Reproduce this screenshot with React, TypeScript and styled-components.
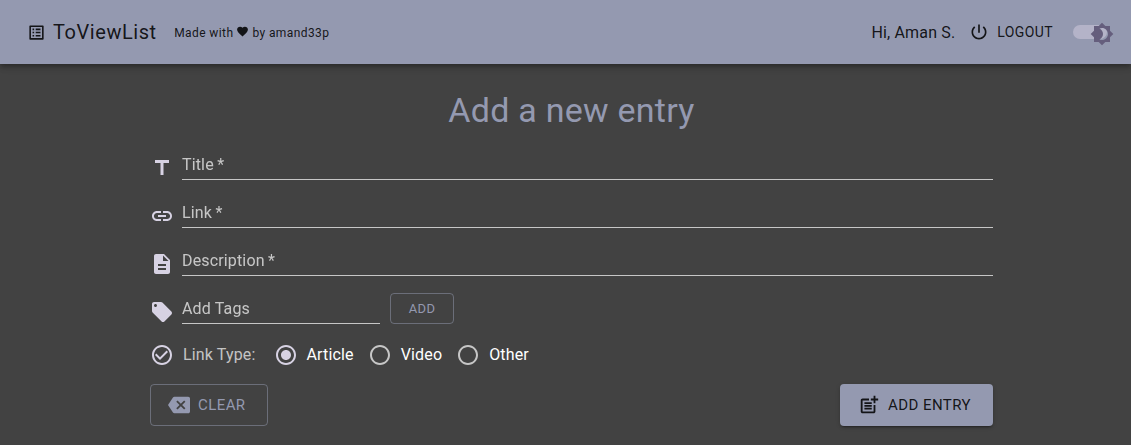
import React from "react";
import styled, { createGlobalStyle } from "styled-components";

const GlobalStyle = createGlobalStyle`
  *, *::before, *::after { box-sizing: border-box; }
  body {
    margin: 0;
    min-height: 100vh;
    overflow: hidden;
    background: #424242;
    font-family: Roboto, "Liberation Sans", sans-serif;
    font-size: 16px;
    line-height: 1.5;
    letter-spacing: 0.00938em;
    color: #fff;
  }
`;

const paths = {
  list: "M11 7h6v2h-6zm0 4h6v2h-6zm0 4h6v2h-6zM7 7h2v2H7zm0 4h2v2H7zm0 4h2v2H7zM20.1 3H3.9c-.5 0-.9.4-.9.9v16.2c0 .4.4.9.9.9h16.2c.4 0 .9-.5.9-.9V3.9c0-.5-.5-.9-.9-.9zM19 19H5V5h14v14z",
  heart:
    "M12 21.35l-1.45-1.32C5.4 15.36 2 12.28 2 8.5 2 5.42 4.42 3 7.5 3c1.74 0 3.41.81 4.5 2.09C13.09 3.81 14.76 3 16.5 3 19.58 3 22 5.42 22 8.5c0 3.78-3.4 6.86-8.55 11.54L12 21.35z",
  power:
    "M13 3h-2v10h2V3zm4.83 2.17l-1.42 1.42C17.99 7.86 19 9.81 19 12c0 3.87-3.13 7-7 7s-7-3.13-7-7c0-2.19 1.01-4.14 2.58-5.42L6.17 5.17C4.23 6.82 3 9.26 3 12c0 4.97 4.03 9 9 9s9-4.03 9-9c0-2.74-1.23-5.18-3.17-6.83z",
  moon: "M20 8.69V4h-4.69L12 .69 8.69 4H4v4.69L.69 12 4 15.31V20h4.69L12 23.31 15.31 20H20v-4.69L23.31 12 20 8.69zM12 18c-.89 0-1.74-.2-2.5-.55C11.56 16.5 13 14.42 13 12s-1.44-4.5-3.5-5.45C10.26 6.2 11.11 6 12 6c3.31 0 6 2.69 6 6s-2.69 6-6 6z",
  title: "M5 4v3h5.5v12h3V7H19V4z",
  link: "M3.9 12c0-1.71 1.39-3.1 3.1-3.1h4V7H7c-2.76 0-5 2.24-5 5s2.24 5 5 5h4v-1.9H7c-1.71 0-3.1-1.39-3.1-3.1zM8 13h8v-2H8v2zm9-6h-4v1.9h4c1.71 0 3.1 1.39 3.1 3.1s-1.39 3.1-3.1 3.1h-4V17h4c2.76 0 5-2.24 5-5s-2.24-5-5-5z",
  description:
    "M14 2H6c-1.1 0-1.99.9-1.99 2L4 20c0 1.1.89 2 1.99 2H18c1.1 0 2-.9 2-2V8l-6-6zm2 16H8v-2h8v2zm0-4H8v-2h8v2zm-3-5V3.5L18.5 9H13z",
  tag: "M21.41 11.58l-9-9C12.05 2.22 11.55 2 11 2H4c-1.1 0-2 .9-2 2v7c0 .55.22 1.05.59 1.42l9 9c.36.36.86.58 1.41.58.55 0 1.05-.22 1.41-.59l7-7c.37-.36.59-.86.59-1.41 0-.55-.23-1.06-.59-1.42zM5.5 7C4.67 7 4 6.33 4 5.5S4.67 4 5.5 4 7 4.67 7 5.5 6.33 7 5.5 7z",
  check:
    "M16.59 7.58L10 14.17l-3.59-3.58L5 12l5 5 8-8zM12 2C6.48 2 2 6.48 2 12s4.48 10 10 10 10-4.48 10-10S17.52 2 12 2zm0 18c-4.42 0-8-3.58-8-8s3.58-8 8-8 8 3.58 8 8-3.58 8-8 8z",
  radioOff:
    "M12 2C6.48 2 2 6.48 2 12s4.48 10 10 10 10-4.48 10-10S17.52 2 12 2zm0 18c-4.42 0-8-3.58-8-8s3.58-8 8-8 8 3.58 8 8-3.58 8-8 8z",
  radioOn:
    "M12 7c-2.76 0-5 2.24-5 5s2.24 5 5 5 5-2.24 5-5-2.24-5-5-5zM12 2C6.48 2 2 6.48 2 12s4.48 10 10 10 10-4.48 10-10S17.52 2 12 2zm0 18c-4.42 0-8-3.58-8-8s3.58-8 8-8 8 3.58 8 8-3.58 8-8 8z",
  backspace:
    "M22 3H7c-.69 0-1.23.35-1.59.88L0 12l5.41 8.11c.36.53.9.89 1.59.89h15c1.1 0 2-.9 2-2V5c0-1.1-.9-2-2-2zm-3 12.59L17.59 17 14 13.41 10.41 17 9 15.59 12.59 12 9 8.41 10.41 7 14 10.59 17.59 7 19 8.41 15.41 12 19 15.59z",
  postAdd:
    "M17 19.22H5V7h7V5H5c-1.1 0-2 .9-2 2v12c0 1.1.9 2 2 2h12c1.1 0 2-.9 2-2v-7h-2v7.22zM19 2h-2v3h-3c.01.01 0 2 0 2h3v2.99c.01.01 2 0 2 0V7h3V5h-3V2zM7 9h8v2H7zM7 12v2h8v-2h-3zM7 15h8v2H7z",
};

const Svg = styled.svg<{ $size: number }>`
  display: block;
  flex: none;
  width: ${(p) => p.$size}px;
  height: ${(p) => p.$size}px;
  fill: currentColor;
`;

const Icon = ({ name, size = 24 }: { name: keyof typeof paths; size?: number }) => (
  <Svg $size={size} viewBox="0 0 24 24" aria-hidden="true">
    <path d={paths[name]} />
  </Svg>
);

const AppBar = styled.header`
  display: flex;
  align-items: center;
  justify-content: space-between;
  height: 64px;
  padding: 0 17px 0 26.5px;
  background: #9499b0;
  color: rgba(0, 0, 0, 0.87);
  box-shadow: 0 2px 4px -1px rgba(0, 0, 0, 0.2), 0 4px 5px 0 rgba(0, 0, 0, 0.14),
    0 1px 10px 0 rgba(0, 0, 0, 0.12);
`;

const Group = styled.div`
  display: flex;
  align-items: center;
`;

const Brand = styled.h6`
  margin: 0 17.5px 0 7.5px;
  font-size: 20px;
  font-weight: 400;
  line-height: 32px;
  letter-spacing: 0.028em;
`;

const Credit = styled.span`
  display: flex;
  gap: 3px;
  padding-top: 1px;
  font-size: 12px;
  line-height: 20px;
  letter-spacing: 0.0333em;
  svg { margin-top: 2px; }
`;

const Greeting = styled.span`
  padding-top: 2px;
`;

const Logout = styled.button`
  display: flex;
  align-items: center;
  gap: 8px;
  margin: 0 20px 0 14px;
  padding: 0;
  border: 0;
  background: none;
  color: inherit;
  font: 400 14px/24px Roboto, sans-serif;
  letter-spacing: 0.02857em;
`;

const Switch = styled.div`
  display: flex;
  align-items: center;
  width: 41px;
  color: #655e7d;
  svg { margin: 4px 0 0 -17px; }
`;

const Track = styled.span`
  flex: none;
  width: 34px;
  height: 14px;
  border-radius: 7px;
  background: #b4b3c8;
`;

const Form = styled.form`
  display: flex;
  flex-direction: column;
  width: 843px;
  margin: 25px 0 0 150px;
`;

const Heading = styled.h4`
  margin: 0 0 17px;
  font-size: 34px;
  font-weight: 400;
  line-height: 42px;
  letter-spacing: 0.00735em;
  text-align: center;
  color: #9499b0;
`;

const FieldRow = styled.div`
  display: flex;
  align-items: flex-end;
  height: 32px;
  margin-bottom: 16px;
  color: #d7d2e3;
`;

const Field = styled.label<{ $width?: number }>`
  flex: ${(p) => (p.$width ? `0 0 ${p.$width}px` : "1")};
  height: 32px;
  margin-left: 8px;
  padding-top: 5px;
  border-bottom: 1px solid #c6c6c6;
  color: rgba(255, 255, 255, 0.7);
  line-height: 24px;
`;

const LabelText = styled.span`
  display: block;
  will-change: transform;
`;

const Button = styled.button<{ $kind: "outlined" | "contained"; $small?: boolean }>`
  display: flex;
  align-items: center;
  justify-content: center;
  gap: 8px;
  height: ${(p) => (p.$small ? 31 : 42)}px;
  min-width: 64px;
  padding: ${(p) => (p.$small ? "0 9px" : p.$kind === "outlined" ? "0 21px 0 17px" : "0 22px 0 18px")};
  border: ${(p) => (p.$kind === "outlined" ? "1px solid rgba(148, 153, 176, 0.5)" : "0")};
  border-radius: 4px;
  background: ${(p) => (p.$kind === "outlined" ? "transparent" : "#9499b0")};
  color: ${(p) => (p.$kind === "outlined" ? "#9499b0" : "rgba(0, 0, 0, 0.87)")};
  box-shadow: ${(p) =>
    p.$kind === "outlined"
      ? "none"
      : "0 3px 1px -2px rgba(0,0,0,.2), 0 2px 2px 0 rgba(0,0,0,.14), 0 1px 5px 0 rgba(0,0,0,.12)"};
  font: 400 ${(p) => (p.$small ? 13 : 15)}px/1.75 Roboto, sans-serif;
  letter-spacing: 0.02857em;
`;

const AddTag = styled(Button)`
  margin-left: 10px;
  padding-top: 1px;
`;

const RadioRow = styled.div`
  display: flex;
  align-items: center;
  height: 24px;
  margin: 3px 0 17px;
  color: #d7d2e3;
`;

const RadioLegend = styled.span`
  margin: 0 18px 0 9px;
  color: rgba(255, 255, 255, 0.7);
`;

const Radio = styled.label<{ $on?: boolean }>`
  display: flex;
  align-items: center;
  gap: 9px;
  margin-right: 14px;
  color: #fff;
  svg { color: ${(p) => (p.$on ? "#d7d2e3" : "rgba(255, 255, 255, 0.7)")}; }
`;

const Actions = styled.div`
  display: flex;
  justify-content: space-between;
`;

const fields = [
  { icon: "title", label: "Title" },
  { icon: "link", label: "Link" },
  { icon: "description", label: "Description" },
] as const;

export default function App() {
  return (
    <>
      <GlobalStyle />
      <AppBar>
        <Group>
          <Icon name="list" size={19} />
          <Brand>ToViewList</Brand>
          <Credit>
            Made with <Icon name="heart" size={13} /> by amand33p
          </Credit>
        </Group>
        <Group>
          <Greeting>Hi, Aman S.</Greeting>
          <Logout type="button">
            <Icon name="power" size={20} />
            LOGOUT
          </Logout>
          <Switch>
            <Track />
            <Icon name="moon" />
          </Switch>
        </Group>
      </AppBar>
      <Form>
        <Heading>Add a new entry</Heading>
        {fields.map((f) => (
          <FieldRow key={f.icon}>
            <Icon name={f.icon} />
            <Field>
              <LabelText>{f.label}&thinsp;*</LabelText>
            </Field>
          </FieldRow>
        ))}
        <FieldRow>
          <Icon name="tag" />
          <Field $width={198}>
            <LabelText>Add Tags</LabelText>
          </Field>
          <AddTag type="button" $kind="outlined" $small>
            ADD
          </AddTag>
        </FieldRow>
        <RadioRow>
          <Icon name="check" />
          <RadioLegend>Link Type:</RadioLegend>
          <Radio $on>
            <Icon name="radioOn" />
            Article
          </Radio>
          <Radio>
            <Icon name="radioOff" />
            Video
          </Radio>
          <Radio>
            <Icon name="radioOff" />
            Other
          </Radio>
        </RadioRow>
        <Actions>
          <Button type="button" $kind="outlined">
            <Icon name="backspace" size={22} />
            CLEAR
          </Button>
          <Button type="button" $kind="contained">
            <Icon name="postAdd" size={22} />
            ADD ENTRY
          </Button>
        </Actions>
      </Form>
    </>
  );
}
